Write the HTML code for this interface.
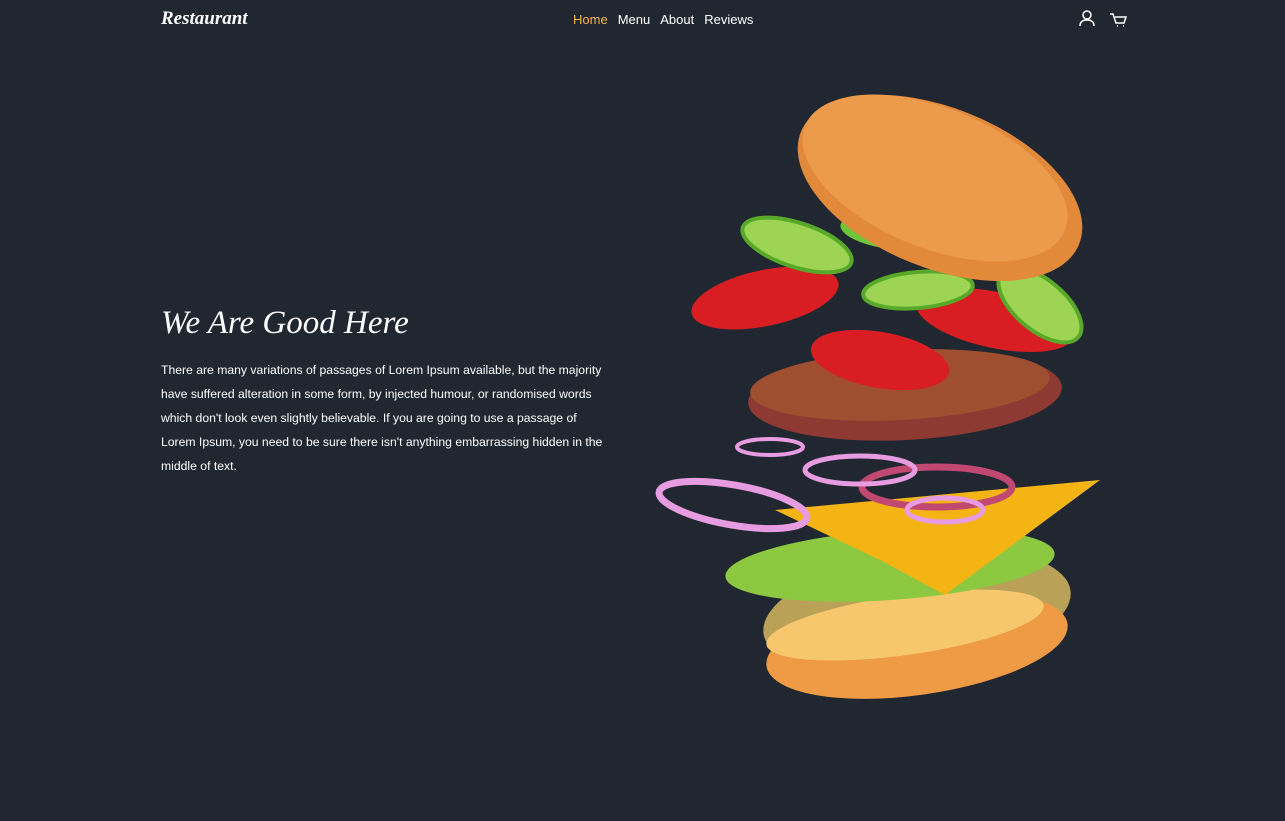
<!DOCTYPE html>
<html><head><meta charset="utf-8"><style>
body{margin:0;width:1285px;height:821px;background:#212731;overflow:hidden;font-family:"Liberation Sans",sans-serif;color:#fff;position:relative}
.logo{position:absolute;left:161px;top:8px;font-family:"Liberation Serif",serif;font-style:italic;font-weight:bold;font-size:19px}
nav{position:absolute;left:573px;top:12px;font-size:13px}
nav span{margin-right:10px}
h1{position:absolute;left:161px;top:305px;margin:0;font-family:"Liberation Serif",serif;font-style:italic;font-weight:normal;font-size:33px}
p{position:absolute;left:161px;top:358px;margin:0;width:448px;font-size:12.2px;line-height:24px}
svg.b{position:absolute;left:0;top:0}
</style></head><body>
<div class="logo">Restaurant</div>
<nav><span style="color:#f4b73a">Home</span><span>Menu</span><span>About</span><span>Reviews</span></nav>
<svg class="b" width="1285" height="821">
<g fill="none" stroke="#fff" stroke-width="1.5"><circle cx="1087" cy="15" r="4"/><path d="M1080 26q0-6 7-6t7 6"/><path d="M1110 14h3l3 9h8l2-6h-11M1117 26h1M1123 26h1"/></g>
<ellipse cx="917" cy="612" rx="155" ry="60" fill="#b9a258" transform="rotate(-8 917 612)"/>
<ellipse cx="917" cy="645" rx="152" ry="50" fill="#ef9a44" transform="rotate(-8 917 645)"/>
<ellipse cx="905" cy="625" rx="140" ry="30" fill="#f7c76d" transform="rotate(-8 905 625)"/>
<ellipse cx="890" cy="565" rx="165" ry="35" fill="#8cc840" transform="rotate(-4 890 565)"/>
<path d="M775 510L1100 480 945 595 880 560z" fill="#f4b414"/>
<ellipse cx="733" cy="505" rx="75" ry="20" fill="none" stroke="#e79be0" stroke-width="7" transform="rotate(10 733 505)"/>
<ellipse cx="937" cy="487" rx="75" ry="20" fill="none" stroke="#c14870" stroke-width="7"/>
<ellipse cx="860" cy="470" rx="55" ry="14" fill="none" stroke="#e79be0" stroke-width="5"/>
<ellipse cx="945" cy="510" rx="38" ry="12" fill="none" stroke="#e79be0" stroke-width="5"/>
<ellipse cx="770" cy="447" rx="33" ry="8" fill="none" stroke="#e79be0" stroke-width="4"/>
<ellipse cx="905" cy="395" rx="157" ry="45" fill="#8e3a32" transform="rotate(-3 905 395)"/>
<ellipse cx="900" cy="385" rx="150" ry="35" fill="#a04e30" transform="rotate(-3 900 385)"/>
<ellipse cx="880" cy="360" rx="70" ry="28" fill="#d81e22" transform="rotate(10 880 360)"/>
<ellipse cx="765" cy="298" rx="75" ry="28" fill="#d81e22" transform="rotate(-12 765 298)"/>
<ellipse cx="995" cy="320" rx="80" ry="28" fill="#d81e22" transform="rotate(12 995 320)"/>
<ellipse cx="797" cy="245" rx="57" ry="22" fill="#9dd454" stroke="#58a82a" stroke-width="4" transform="rotate(18 797 245)"/>
<ellipse cx="918" cy="290" rx="55" ry="18" fill="#9dd454" stroke="#58a82a" stroke-width="4" transform="rotate(-5 918 290)"/>
<ellipse cx="1040" cy="305" rx="50" ry="25" fill="#9dd454" stroke="#58a82a" stroke-width="4" transform="rotate(40 1040 305)"/>
<ellipse cx="890" cy="232" rx="50" ry="17" fill="#70c43a" transform="rotate(8 890 232)"/>
<ellipse cx="940" cy="188" rx="150" ry="80" fill="#e38a3a" transform="rotate(22 940 188)"/>
<ellipse cx="935" cy="178" rx="140" ry="70" fill="#ec9a4c" transform="rotate(22 935 178)"/>
</svg>
<h1>We Are Good Here</h1>
<p>There are many variations of passages of Lorem Ipsum available, but the majority have suffered alteration in some form, by injected humour, or randomised words which don't look even slightly believable. If you are going to use a passage of Lorem Ipsum, you need to be sure there isn't anything embarrassing hidden in the middle of text.</p>
</body></html>
